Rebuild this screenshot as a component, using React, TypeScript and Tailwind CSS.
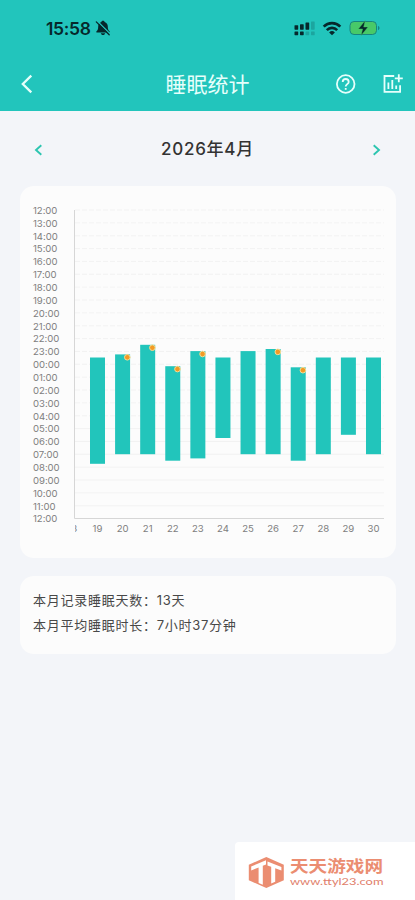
import React from "react";

const uiFont = "font-['Inter','Noto_Sans_CJK_SC',sans-serif]";

const hours = Array.from({ length: 25 }, (_, i) => `${String((i + 12) % 24).padStart(2, "0")}:00`);

type Bar = { day: number; top: number; bottom: number; dot?: boolean };

const bars: Bar[] = [
  { day: 19, top: 357.5, bottom: 463.8 },
  { day: 20, top: 354.4, bottom: 454.2 },
  { day: 21, top: 344.8, bottom: 454.2 },
  { day: 22, top: 366.2, bottom: 460.7 },
  { day: 23, top: 351.1, bottom: 458.4 },
  { day: 24, top: 357.5, bottom: 438 },
  { day: 25, top: 351.1, bottom: 454.2 },
  { day: 26, top: 349, bottom: 454.2 },
  { day: 27, top: 367.3, bottom: 460.7 },
  { day: 28, top: 357.5, bottom: 454.2 },
  { day: 29, top: 357.5, bottom: 434.8 },
  { day: 30, top: 357.5, bottom: 454.2 },
].map((b) => ({ ...b, dot: [20, 21, 22, 23, 26, 27].includes(b.day) }));

function StatusBar() {
  return (
    <div className="flex h-14 items-center justify-between pl-[46px] pr-[35px]">
      <div className="flex items-center gap-[3px]">
        <span className="w-[46px] whitespace-nowrap pt-px text-[17.5px] font-semibold leading-none tracking-[-0.3px] text-[#06282b]">15:58</span>
        <svg width="16" height="16" viewBox="0 0 16 16" fill="#06282b">
          <path d="M8 .8c.9 0 1.500.5 1.600 1.200 2.100.6 3.200 2.300 3.200 4.500 0 2.700.5 3.600 1.700 4.700.5.5.2 1.300-.5 1.300H2c-.7 0-1-.8-.5-1.300C2.700 10.100 3.200 9.200 3.200 6.500c0-2.200 1.100-3.900 3.200-4.500C6.500 1.300 7.100.8 8 .8zM5.800 13.200h4.400c-.2 1.100-1.100 1.800-2.200 1.800s-2-.7-2.200-1.800z" />
          <path d="M2.400 1.200 15 13.800" stroke="#22c5bc" strokeWidth="1.300" />
          <path d="M1.300 1.900 14.200 14.800" stroke="#06282b" strokeWidth="1.300" strokeLinecap="round" />
        </svg>
      </div>
      <div className="flex items-center gap-[7px]">
        <svg width="22" height="15" viewBox="0 0 22 15" fill="#06282b">
          <rect x="1.500" y="4.200" width="3.700" height="4.500" rx=".6" />
          <rect x="7" y="3.200" width="3.700" height="5.500" rx=".6" />
          <rect x="12.500" y="1.500" width="3.700" height="7.200" rx=".6" />
          <rect x="18" y=".5" width="3.700" height="8.200" rx=".6" opacity=".2" />
          <rect x="1.500" y="10.500" width="3.700" height="3.700" rx=".6" />
          <rect x="7" y="10.500" width="3.700" height="3.700" rx=".6" />
          <rect x="12.500" y="10.500" width="3.700" height="3.700" rx=".6" opacity=".2" />
          <rect x="18" y="10.500" width="3.700" height="3.700" rx=".6" opacity=".2" />
        </svg>
        <svg width="20" height="15" viewBox="0 0 20 15" fill="none" stroke="#06282b" strokeWidth="2.700">
          <path d="M1.700 5.600a11.800 11.800 0 0 1 16.600 0" />
          <path d="M4.800 9.100a7.400 7.400 0 0 1 10.400 0" />
          <path d="M10 14.300 7.100 11.400a4.100 4.100 0 0 1 5.800 0z" fill="#06282b" stroke="none" />
        </svg>
        <svg width="31" height="16" viewBox="0 0 31 16">
          <rect x="1" y="1.500" width="26.500" height="13" rx="4" fill="#48c968" stroke="#16857f" />
          <path d="M29 6v4.200c1-.3 1.500-1.100 1.500-2.100S30 6.300 29 6z" fill="#16857f" />
          <path d="M16.200.6 9.300 9h4.300l-1.500 6.500L19 7h-4.300z" fill="#06282b" stroke="#48c968" strokeWidth=".4" />
        </svg>
      </div>
    </div>
  );
}

function TitleBar() {
  return (
    <div className="grid h-[55px] grid-cols-[104px_1fr_104px] items-center text-[#e6fffb]">
      <svg className="ml-[20px]" width="14" height="20" viewBox="0 0 14 20" fill="none" stroke="currentColor" strokeWidth="2.300">
        <path d="M11.300 1.600 2.800 10l8.500 8.400" />
      </svg>
      <h1 className="pt-0.5 text-center text-[21px] font-normal leading-none">睡眠统计</h1>
      <div className="flex items-center gap-[25px] pl-6">
        <svg className="shrink-0" width="22" height="22" viewBox="0 0 22 22" fill="none" stroke="currentColor" strokeWidth="1.800">
          <circle cx="10.700" cy="11" r="8.800" />
          <path d="M7.700 9c0-1.700 1.300-3 3-3s3 1.300 3 2.900c0 2.200-3 2.300-3 4.600" />
          <path d="M10.700 15v1.800" />
        </svg>
        <svg className="shrink-0" width="22" height="22" viewBox="0 0 22 22" fill="none" stroke="currentColor" strokeWidth="1.800">
          <path d="M12.200 3H2.500v15.800h15.600v-6.500M16.800 1.300v8M12.800 5.300h8" />
          <path d="M6.400 9.500V16M10.300 7v9M14.200 12.500V16" />
        </svg>
      </div>
    </div>
  );
}

function SleepChart() {
  const step = 308.6 / 24;
  return (
    <svg width="376" height="372" viewBox="20 186 376 372" className="block">
      <defs>
        <clipPath id="plot">
          <rect x="75" y="200" width="315" height="350" />
        </clipPath>
      </defs>
      {hours.map((h, i) => (
        <g key={i}>
          {i < 24 && (
            <path d={`M75 ${210 + i * step}H384`} stroke="#f0f0f0" strokeWidth=".8" strokeDasharray={i < 17 ? "5 2" : undefined} />
          )}
          <text x="33" y={213.8 + i * step} fontSize="9.600" fill="#808080" letterSpacing="-.05">
            {h}
          </text>
        </g>
      ))}
      <path d="M74.500 210V518.500H384" stroke="#d6d6d6" fill="none" />
      <g clipPath="url(#plot)">
        <text x="72.300" y="532.300" fontSize="9.600" fill="#808080" textAnchor="middle">18</text>
      </g>
      {bars.map((b, i) => {
        const x = 97.5 + i * 25.09;
        return (
          <g key={b.day}>
            <rect x={x - 7.5} y={b.top} width="15" height={b.bottom - b.top} fill="#22c5bb" />
            {b.dot && <circle cx={x + 4.7} cy={b.top + 2.9} r="2.800" fill="#f29a24" stroke="#f3dc96" strokeWidth="1" />}
            <text x={x} y="532.300" fontSize="9.600" fill="#808080" textAnchor="middle">
              {b.day}
            </text>
          </g>
        );
      })}
    </svg>
  );
}

function Watermark() {
  return (
    <div className="ml-auto mt-auto flex h-[58px] w-[180px] items-center rounded-tl bg-white pl-[13px]">
      <svg width="154" height="46" viewBox="248 850 154 46">
        <path d="M266.300 859 283.800 866.700V882.300L266.300 890 248.800 882.300V866.700z" fill="#eb8d71" />
        <path d="M251.200 868.400 266 862.200V866.400L262.800 867.700V886.800L258.600 884.900V869.400L251.200 872.400z" fill="#fff" />
        <path d="M267.500 863.600 281.400 868.900V872.600L275.200 870.300V883.800L271.200 885.600V868.800L267.500 867.400z" fill="#fff" />
        <text x="290" y="874.300" fontSize="16" fontWeight="700" fill="#eb8d71" textLength="93" lengthAdjust="spacingAndGlyphs" fontFamily="'Noto Sans CJK SC', sans-serif">
          天天游戏网
        </text>
        <text x="290" y="887" fontSize="9.200" fill="#df806b" textLength="93.500" lengthAdjust="spacingAndGlyphs" fontFamily="Lato, sans-serif">
          www.ttyl23.com
        </text>
      </svg>
    </div>
  );
}

export default function App() {
  return (
    <div className={`flex h-[900px] w-[415px] flex-col overflow-hidden bg-[#f3f5f9] ${uiFont}`}>
      <header className="h-[111px] shrink-0 bg-[#22c5bc]">
        <StatusBar />
        <TitleBar />
      </header>
      <div className="flex h-[75px] shrink-0 items-center justify-between px-[33px] pb-px pt-[3px]">
        <svg width="12" height="14" viewBox="0 0 12 14" fill="none" stroke="#2cc5b0" strokeWidth="1.900"><path d="M8.300 2.200 3 7l5.300 4.800" /></svg>
        <h2 className="text-[17px] font-medium leading-none tracking-[0.75px] text-[#333]">2026年4月</h2>
        <svg width="12" height="14" viewBox="0 0 12 14" fill="none" stroke="#2cc5b0" strokeWidth="1.900"><path d="M3.700 2.200 9 7l-5.300 4.800" /></svg>
      </div>
      <main className="flex flex-col gap-[18px] pl-5 pr-[19px]">
        <section className="h-[372px] overflow-hidden rounded-[14px] bg-[#fcfcfc]">
          <SleepChart />
        </section>
        <section className="h-[78px] rounded-[14px] bg-[#fcfcfc] px-[13px] pt-3 text-[13px] leading-[25px] tracking-[0.74px] text-[#484848]">
          <p>本月记录睡眠天数：13天</p>
          <p>本月平均睡眠时长：7小时37分钟</p>
        </section>
      </main>
      <Watermark />
    </div>
  );
}
